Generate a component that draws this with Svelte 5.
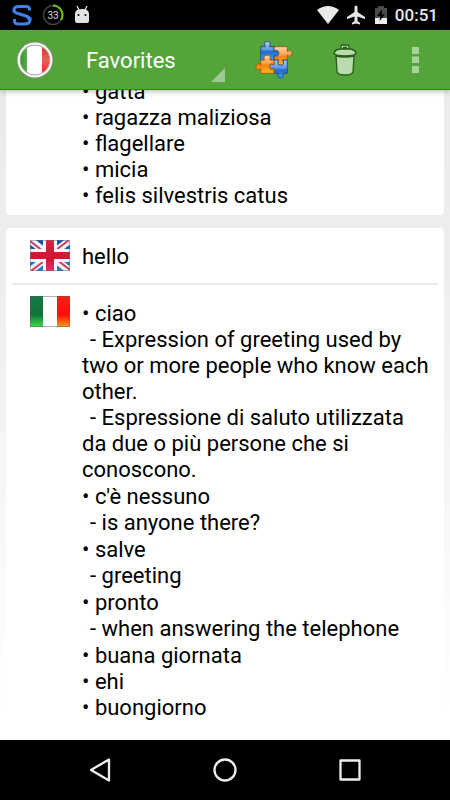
<script>
  let list = $state('Favorites');

  const previous = ['gatta', 'ragazza maliziosa', 'flagellare', 'micia', 'felis silvestris catus'];

  const entries = [
    {
      word: 'ciao',
      notes: [
        'Expression of greeting used by two or more people who know each other.',
        'Espressione di saluto utilizzata da due o più persone che si conoscono.'
      ]
    },
    { word: "c'è nessuno", notes: ['is anyone there?'] },
    { word: 'salve', notes: ['greeting'] },
    { word: 'pronto', notes: ['when answering the telephone'] },
    { word: 'buana giornata', notes: [] },
    { word: 'ehi', notes: [] },
    { word: 'buongiorno', notes: [] }
  ];
</script>

<div class="screen">
  <div class="status">
    <div class="group">
      <svg width="20" height="22" viewBox="0 0 20 22" fill="none" stroke="#3f80ea" stroke-width="3">
        <path d="M17.500 6.500V5Q17.500 2.500 14 2.500H7Q2 2.500 2 6Q2 8.500 6 9.500L14 12Q18 13.500 18 16Q18 20 12 20H7Q2.500 20 2.500 17V15" />
        <path d="M0.500 7.500H4M15 14.500H19.500" stroke-width="2" />
      </svg>
      <svg class="gauge" width="22" height="22" viewBox="0 0 22 22">
        <circle cx="11" cy="11" r="9.500" fill="none" stroke="#444" stroke-width="1.500" />
        <path d="M11 1.500A9.500 9.500 0 0 1 19 16" fill="none" stroke="#62c900" stroke-width="2" />
        <text x="11" y="14.500" text-anchor="middle">33</text>
      </svg>
      <svg width="16" height="20" viewBox="0 0 16 20" fill="#e4e4e4">
        <path d="M3 1L5 5M13 1L11 5" stroke="#e4e4e4" stroke-width="1.300" />
        <path d="M1 9Q1 4 8 4Q15 4 15 9V16Q15 18 13 18H3Q1 18 1 16Z" />
        <circle cx="4.500" cy="10" r="1.100" fill="#111" />
        <circle cx="11.500" cy="10" r="1.100" fill="#111" />
      </svg>
    </div>
    <div class="group right">
      <svg width="22" height="18" viewBox="0 0 22 18"><path d="M0 4Q11 -4 22 4L11 18Z" fill="#e8e8e8" /></svg>
      <svg width="18" height="20" viewBox="0 0 18 20"><path d="M9 0.500C10.200 0.500 10.500 1.500 10.500 3V7L18 12V14L10.500 11.500V16L13 18V19.500L9 18.500L5 19.500V18L7.500 16V11.500L0 14V12L7.500 7V3C7.500 1.500 7.800 0.500 9 0.500Z" fill="#e8e8e8" /></svg>
      <svg width="12" height="18" viewBox="0 0 12 18">
        <path d="M0 2H3V0H9V2H12V18H0Z" fill="#4a4a4a" />
        <path d="M0 12H12V18H0Z" fill="#eee" />
        <path d="M7 3.500L2 10H5.300L4.500 15L10 8.500H6.800Z" fill="#000" />
      </svg>
      <time>00:51</time>
    </div>
  </div>

  <header>
    <button class="home" aria-label="Home">
      <svg width="38" height="38" viewBox="0 0 38 38">
        <defs>
          <clipPath id="disc"><circle cx="19" cy="19" r="14.500" /></clipPath>
          <linearGradient id="dg" x2="1"><stop offset="0" stop-color="#138a12" /><stop offset="1" stop-color="#5cae4c" /></linearGradient>
          <linearGradient id="dr" y2="1" x2="0"><stop offset="0" stop-color="#c82822" /><stop offset="0.500" stop-color="#f65a50" /><stop offset="1" stop-color="#ef1414" /></linearGradient>
        </defs>
        <circle cx="19" cy="19" r="18.500" fill="#79906d" />
        <circle cx="19" cy="19" r="17.500" fill="#f6f6f6" />
        <circle cx="19" cy="19" r="15.200" fill="#8c8c8c" />
        <g clip-path="url(#disc)">
          <path d="M0 0H38V38H0Z" fill="#fff" />
          <path d="M0 0H11V38H0Z" fill="url(#dg)" />
          <path d="M26 0H38V38H26Z" fill="url(#dr)" />
        </g>
      </svg>
    </button>
    <div class="picker">
      <select aria-label="Word list" bind:value={list}>
        <option>Favorites</option>
        <option>History</option>
      </select>
      <svg width="14" height="14" viewBox="0 0 14 14"><path d="M14 0V14H0Z" fill="#a0c894" /></svg>
    </div>
    <button class="puzzle" aria-label="Play puzzle">
      <svg width="38" height="38" viewBox="0 0 40 40" stroke-width="1" stroke-linejoin="round">
        <defs>
          <linearGradient id="pb" x2="0" y2="1"><stop offset="0" stop-color="#b4cff5" /><stop offset="0.450" stop-color="#5b96e2" /><stop offset="0.550" stop-color="#2269c8" /><stop offset="1" stop-color="#35a4fb" /></linearGradient>
          <linearGradient id="po" x2="0" y2="1"><stop offset="0" stop-color="#ffd9a8" /><stop offset="0.450" stop-color="#ff9c45" /><stop offset="0.550" stop-color="#f78200" /><stop offset="1" stop-color="#ffba20" /></linearGradient>
        </defs>
        <path d="M20 6H34V11C37 9 39 10.500 39 13C39 15.500 37 17 34 15V20H29C31 23 30 25.500 27 25.500C24 25.500 23 23 25 20H20Z" fill="url(#po)" stroke="#9c5a17" />
        <path d="M20 20H25C23 23 24 25.500 27 25.500C30 25.500 31 23 29 20H34V34H29C31 37 30 39 27 39C24 39 23 37 25 34H20V29C17 31 15.500 29.500 15.500 27C15.500 24.500 17 23 20 25Z" fill="url(#pb)" stroke="#204b91" />
        <path d="M6 6H11C9 3 10 0.500 13 0.500C16 0.500 17 3 15 6H20V11C23 9 25 10.500 25 13C25 15.500 23 17 20 15V20H6Z" fill="url(#pb)" stroke="#204b91" />
        <path d="M6 20H10C8.500 17 10 15 13 15C16 15 17 17 15.500 20H20V25C17 23 15.500 24.500 15.500 27C15.500 29.500 17 31 20 29V34H6V29C3 31 1 29.500 1 27C1 24.500 3 23 6 25Z" fill="url(#po)" stroke="#9c5a17" />
      </svg>
    </button>
    <button class="trash" aria-label="Delete">
      <svg width="24" height="32" viewBox="0 0 24 32" fill="#badbae" stroke="#285b18" stroke-width="1.300" stroke-linejoin="round">
        <path d="M8 6V2.500Q8 1 9.500 1H14.500Q16 1 16 2.500V6H13.500V3.500H10.500V6Z" />
        <path d="M3 12Q12 14 21 12L20 28Q19 31 12 31Q5 31 4 28Z" />
        <path d="M1 9.500Q1.500 5.500 7 5H17Q22.500 5.500 23 9.500Q21 12 12 12Q3 12 1 9.500Z" />
      </svg>
    </button>
    <button class="more" aria-label="More options">
      <svg width="7" height="26" viewBox="0 0 7 26" fill="#a9d19b"><path d="M0 0H7V7H0ZM0 9.500H7V16H0ZM0 19H7V26H0Z" /></svg>
    </button>
  </header>

  <main>
    <article class="previous">
      <ul>
        {#each previous as word}<li>• {word}</li>{/each}
      </ul>
    </article>

    <article>
      <div class="source">
        <svg class="flag" width="40" height="31" viewBox="0 0 40 31">
          <defs>
            <linearGradient id="uk" x2="0" y2="1"><stop offset="0" stop-color="#174c9c" /><stop offset="1" stop-color="#2e78d6" /></linearGradient>
            <linearGradient id="ur" x2="0" y2="1"><stop offset="0" stop-color="#d22640" /><stop offset="0.600" stop-color="#cb1832" /><stop offset="1" stop-color="#d8386c" /></linearGradient>
          </defs>
          <path d="M0 0H40V31H0Z" fill="url(#uk)" />
          <path d="M0 0L40 31M40 0L0 31" stroke="#f4f5fa" stroke-width="7" />
          <path d="M0 1L18 15M40 30L22 16M39 0L22 13M1 31L18 18" stroke="#d53853" stroke-width="2" />
          <path d="M13 0H27V31H13ZM0 9H40V22H0Z" fill="#f8f8fb" />
          <path d="M16 0H24V12H40V19H24V31H16V19H0V12H16Z" fill="url(#ur)" />
          <path d="M0.500 0.500H39.500V30.500H0.500Z" fill="none" stroke="#6c6c86" stroke-opacity="0.500" />
        </svg>
        <h2>hello</h2>
      </div>
      <div class="target">
        <svg class="flag" width="40" height="31" viewBox="0 0 40 31">
          <defs>
            <linearGradient id="ig" x2="0" y2="1"><stop offset="0" stop-color="#197a48" /><stop offset="0.600" stop-color="#107139" /><stop offset="1" stop-color="#39df48" /></linearGradient>
            <linearGradient id="ir" x2="0" y2="1"><stop offset="0" stop-color="#ff201c" /><stop offset="0.600" stop-color="#ff0c08" /><stop offset="1" stop-color="#ff9b20" /></linearGradient>
          </defs>
          <path d="M0 0H40V31H0Z" fill="#f9fbfd" />
          <path d="M0 0H13V31H0Z" fill="url(#ig)" />
          <path d="M27 0H40V31H27Z" fill="url(#ir)" />
          <path d="M0.500 0.500H39.500V30.500H0.500Z" fill="none" stroke="#555" stroke-opacity="0.450" />
        </svg>
        <ul>
          {#each entries as entry}
            <li class:noted={entry.notes.length > 0}>
              • {entry.word}
              {#each entry.notes as note}<p>- {note}</p>{/each}
            </li>
          {/each}
        </ul>
      </div>
    </article>
  </main>

  <nav>
    <button aria-label="Back"><svg width="24" height="26" viewBox="0 0 24 26"><path d="M21 2.500V23.500L3 13Z" /></svg></button>
    <button aria-label="Home screen"><svg width="24" height="26" viewBox="0 0 24 26"><circle cx="12" cy="13" r="10.500" /></svg></button>
    <button aria-label="Recent apps"><svg width="24" height="26" viewBox="0 0 24 26"><path d="M2.500 3.500H21.500V22.500H2.500Z" /></svg></button>
  </nav>
</div>

<style>
  .screen {
    display: flex;
    flex-direction: column;
    height: 100vh;
    overflow: hidden;
    background: #000;
    color: #000;
    font-family: Roboto, "Noto Sans", sans-serif;
    font-size: 22px;
    line-height: 26px;
  }
  svg { display: block; flex: none; }
  button {
    display: flex;
    align-items: center;
    justify-content: center;
    padding: 0;
    border: 0;
    background: none;
    cursor: pointer;
  }
  ul, p, h2 { margin: 0; padding: 0; list-style: none; }
  h2 { font-size: 22px; font-weight: 400; }

  .status {
    display: flex;
    flex: none;
    align-items: center;
    justify-content: space-between;
    height: 30px;
    padding: 0 12px;
  }
  .group { display: flex; align-items: center; gap: 10px; }
  .group.right { gap: 8px; }
  .group.right svg:nth-child(3) { margin-left: 2px; }
  .gauge text { font-size: 10px; fill: #ddd; }
  time { color: #e8e8e8; font-size: 17px; font-weight: 500; }

  header {
    position: relative;
    z-index: 1;
    display: flex;
    flex: none;
    box-sizing: border-box;
    height: 60px;
    border-bottom: 1px solid #2d8512;
    background: #54a43a;
    box-shadow: 0 1px 6px rgba(0, 0, 0, 0.3);
  }
  .home { width: 70px; }
  .picker { position: relative; flex: 1; max-width: 155px; }
  select {
    width: 100%;
    height: 100%;
    padding: 2px 16px 0;
    border: 0;
    background: none;
    color: #fff;
    font: inherit;
    appearance: none;
  }
  select option { color: #000; }
  .picker svg { position: absolute; right: 0; bottom: 7px; pointer-events: none; }
  .puzzle { width: 98px; }
  .trash { width: 44px; }
  .more { width: 70px; margin-left: auto; }

  main {
    flex: 1;
    overflow: hidden;
    padding: 0 6px;
    background: linear-gradient(#ebebeb, #eeeeee 28%, #ffffff 95%);
  }
  article {
    margin-bottom: 13px;
    border-radius: 4px;
    background: #fff;
  }
  .previous { margin-top: -11px; padding: 0 4px 6px 76px; }
  .source {
    display: flex;
    align-items: center;
    gap: 12px;
    height: 55px;
    margin: 0 6px;
    padding-left: 18px;
    border-bottom: 2px solid #e9e9e9;
  }
  .source h2 { padding-top: 2px; }
  .target {
    display: flex;
    gap: 12px;
    padding: 16px 14px 24px 24px;
  }
  .target .flag { margin-top: -5px; }
  .noted { margin-bottom: 1px; }
  p { text-indent: 8px; }

  nav {
    display: flex;
    flex: none;
    align-items: center;
    justify-content: center;
    height: 60px;
  }
  nav button { width: 125px; height: 60px; }
  nav svg { fill: none; stroke: #eee; stroke-width: 2.300px; stroke-linejoin: round; }
</style>
